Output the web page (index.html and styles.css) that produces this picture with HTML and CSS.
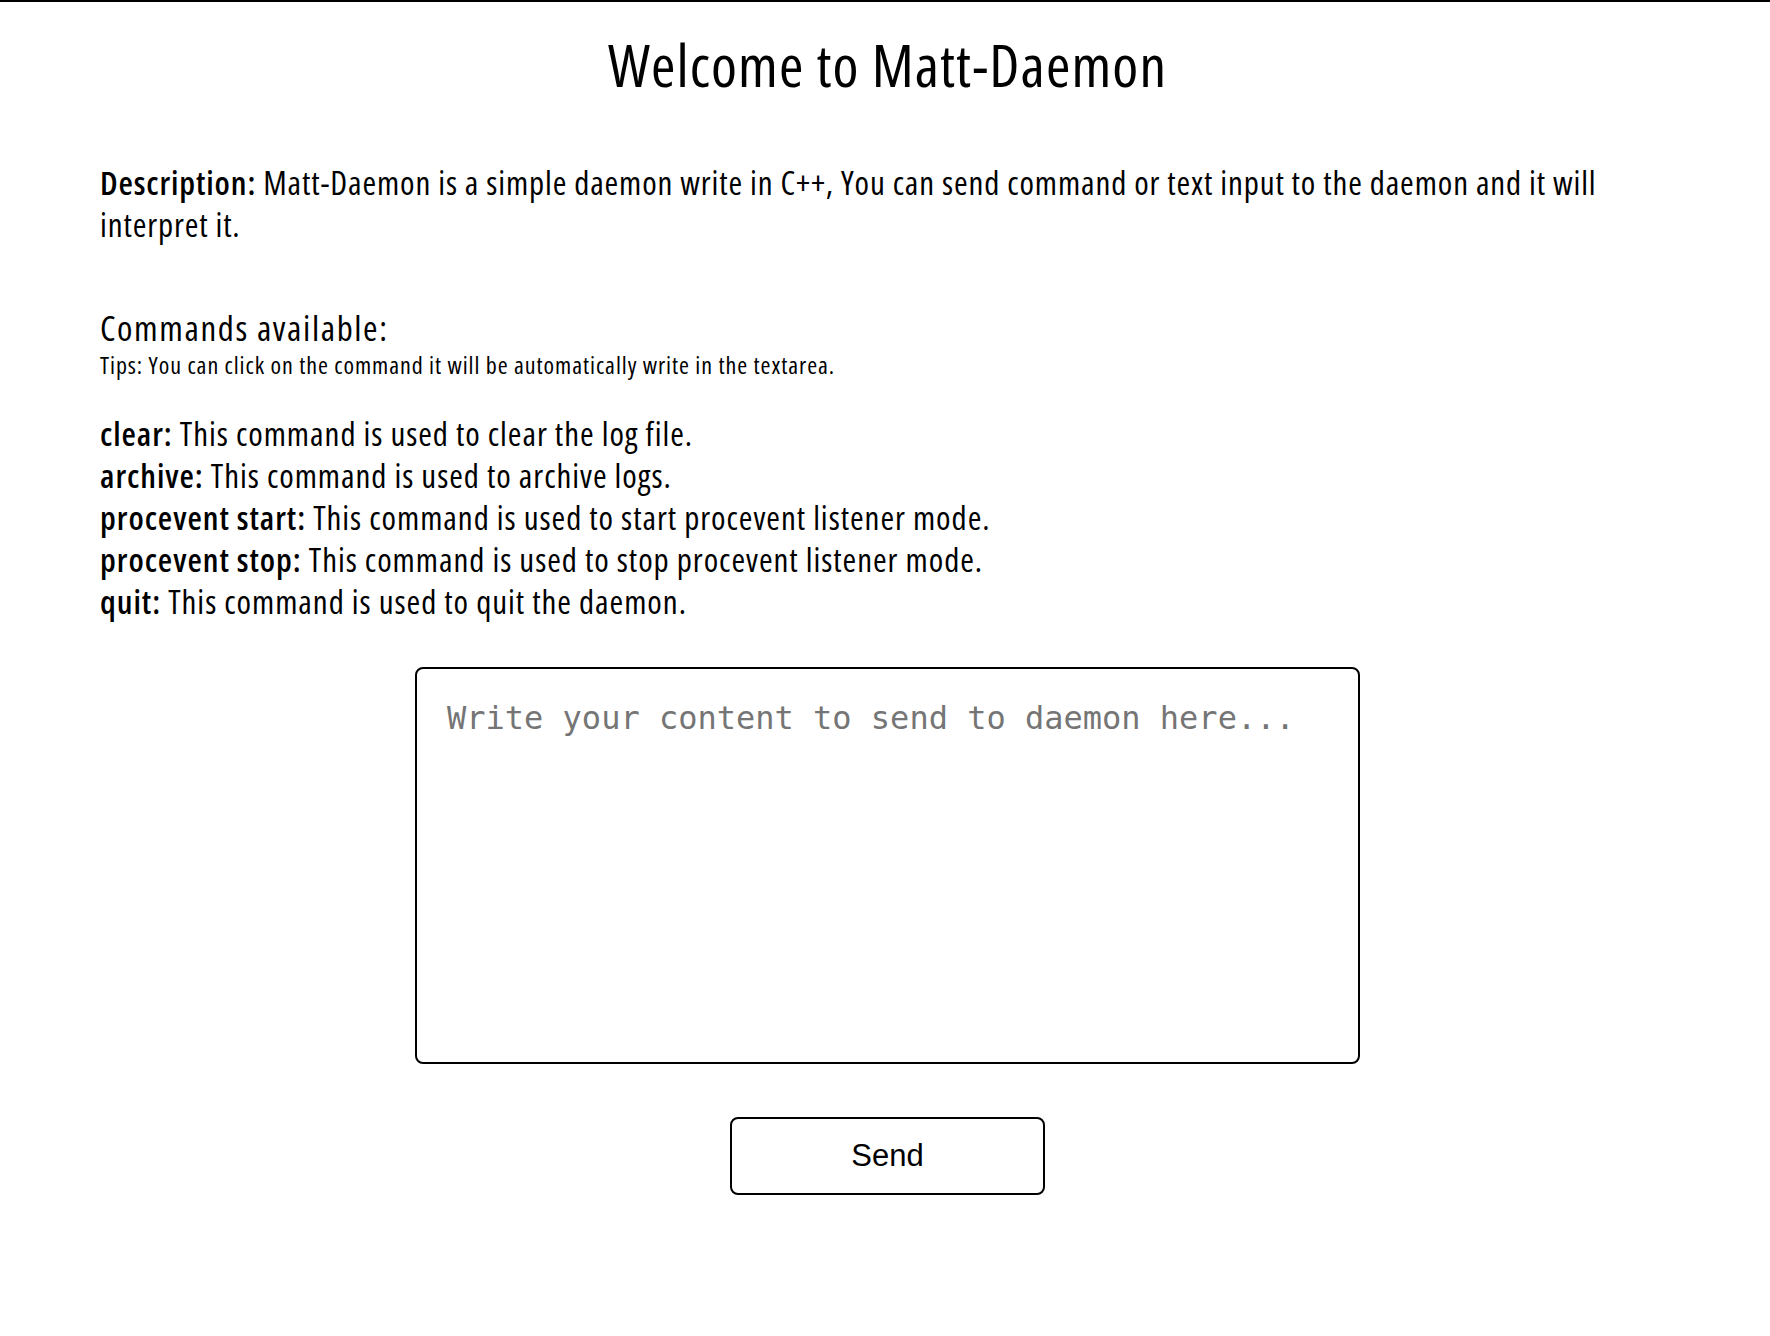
FILE: index.html
```html
<!DOCTYPE html>
<html lang="en">
<head>
<meta charset="utf-8">
<title>Matt-Daemon</title>
<link rel="stylesheet" href="styles.css">
</head>
<body>
<main class="page">
  <h1 class="title">Welcome to Matt-Daemon</h1>
  <p class="description"><strong>Description:</strong> Matt-Daemon is a simple daemon write in C++, You can send command or text input to the daemon and it will interpret it.</p>
  <h2 class="commands-title">Commands available:</h2>
  <p class="tips">Tips: You can click on the command it will be automatically write in the textarea.</p>
  <ul class="commands">
    <li><strong>clear:</strong> This command is used to clear the log file.</li>
    <li><strong>archive:</strong> This command is used to archive logs.</li>
    <li><strong>procevent start:</strong> This command is used to start procevent listener mode.</li>
    <li><strong>procevent stop:</strong> This command is used to stop procevent listener mode.</li>
    <li><strong>quit:</strong> This command is used to quit the daemon.</li>
  </ul>
  <form class="sender">
    <textarea class="content" placeholder="Write your content to send to daemon here..."></textarea>
    <button type="button" class="send">Send</button>
  </form>
</main>
</body>
</html>
```

FILE: styles.css
```css
html, body {
  margin: 0;
  padding: 0;
  background: #fff;
}

body {
  border-top: 2px solid #000;
  font-family: "Open Sans", "DejaVu Sans Condensed", sans-serif;
  font-stretch: 75%;
  font-weight: 400;
  color: #000;
}

.page {
  padding: 0 95px 0 100px;
  display: flex;
  flex-direction: column;
}

.title {
  margin: 26px 0 0;
  font-size: 59px;
  line-height: 72px;
  letter-spacing: 1.1px;
  font-weight: 400;
  text-align: center;
}

.description {
  margin: 62px 0 0;
  font-size: 33px;
  line-height: 42px;
  letter-spacing: 0.87px;
}

strong {
  font-weight: 600;
}

.commands-title {
  margin: 60px 0 0;
  font-size: 35px;
  line-height: 44px;
  letter-spacing: 1.6px;
  font-weight: 400;
}

.tips {
  margin: 0;
  font-size: 24px;
  line-height: 30px;
  letter-spacing: 0.95px;
}

.commands {
  margin: 33px 0 0;
  padding: 0;
  list-style: none;
  font-size: 33px;
  line-height: 42px;
  letter-spacing: 0.95px;
}

.sender {
  margin: 44px 0 0;
  display: flex;
  flex-direction: column;
  align-items: center;
}

.content {
  box-sizing: border-box;
  width: 945px;
  height: 397px;
  padding: 30px;
  border: 2px solid #000;
  border-radius: 8px;
  font-family: "DejaVu Sans Mono", monospace;
  font-stretch: normal;
  font-size: 32px;
  letter-spacing: normal;
  resize: none;
  outline: none;
}

.content::placeholder {
  color: #757575;
}

.send {
  box-sizing: border-box;
  margin-top: 53px;
  width: 315px;
  height: 78px;
  background: #fff;
  border: 2px solid #000;
  border-radius: 8px;
  font-family: "Liberation Sans", Arial, sans-serif;
  font-stretch: normal;
  font-size: 31px;
  letter-spacing: normal;
  color: #000;
}
```
